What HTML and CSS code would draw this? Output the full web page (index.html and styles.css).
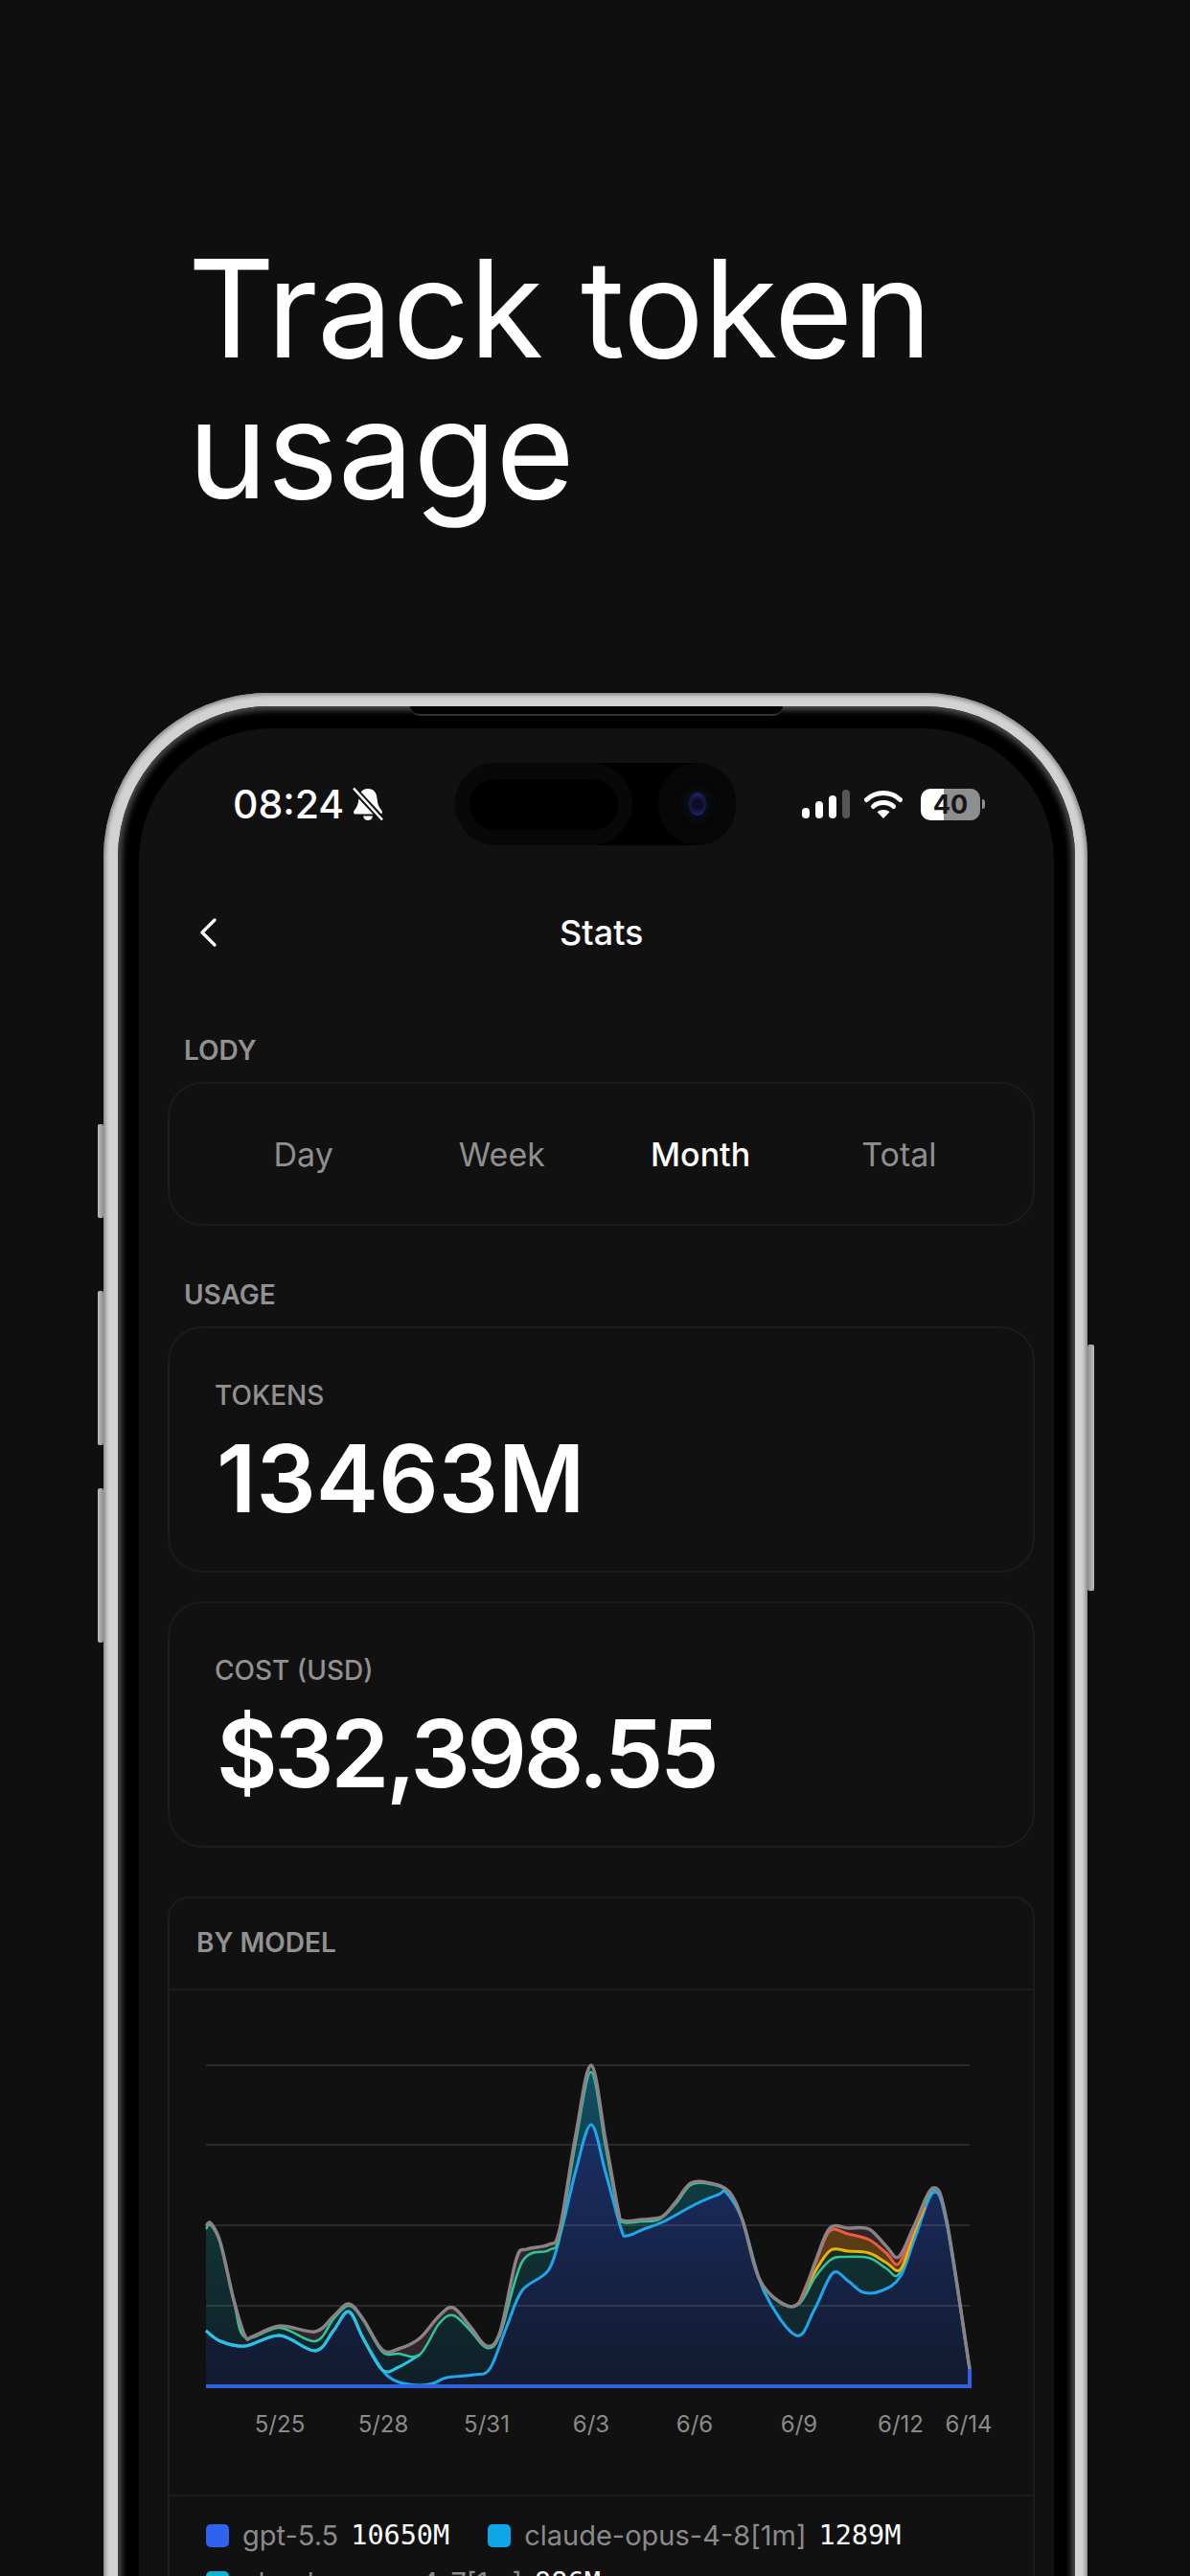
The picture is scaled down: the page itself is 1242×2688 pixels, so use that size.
FILE: index.html
```html
<!DOCTYPE html>
<html lang="en">

<head>
    <meta charset="UTF-8">
    <meta name="viewport" content="width=device-width, initial-scale=1.0">
    <title>Track token usage</title>
    <link rel="stylesheet" href="styles.css">
</head>

<body>
    <h1 class="headline">Track token<br>usage</h1>

    <div class="phone">
        <span class="side-btn btn-mute"></span>
        <span class="side-btn btn-up"></span>
        <span class="side-btn btn-down"></span>
        <span class="side-btn btn-power"></span>
        <span class="speaker"></span>

        <div class="bezel">
            <div class="screen">
                <div class="status">
                    <div class="status-left">
                        <span class="time">08:24</span>
                        <svg class="bell" viewBox="0 0 34 36">
                            <path d="M17 2c-6 0-9 4.500-9.500 10-.4 5-1.500 9-5 13-1 1.500-.3 3.500 1.500 3.500h26c1.800 0 2.500-2 1.500-3.500-3.500-4-4.600-8-5-13C26 6 23 2 17 2z" fill="#fff"/>
                            <path d="M12 30.500h10c-.5 3-2.500 4.500-5 4.500s-4.500-1.500-5-4.500z" fill="#fff"/>
                            <path d="M3 3l29 31" stroke="#111" stroke-width="6.500"/>
                            <path d="M2 1.500l30 33" stroke="#fff" stroke-width="2.600"/>
                        </svg>
                    </div>
                    <div class="island">
                        <div class="island-left"><span></span></div>
                        <div class="island-cam"><span></span></div>
                    </div>
                    <div class="status-right">
                        <div class="signal">
                            <span class="bar-1"></span>
                            <span class="bar-2"></span>
                            <span class="bar-3"></span>
                            <span class="bar-4"></span>
                        </div>
                        <svg class="wifi" viewBox="0 0 40 30">
                            <path d="M2.500 10.500C12 1 28 1 37.500 10.500" fill="none" stroke="#fff" stroke-width="5" stroke-linecap="round"/>
                            <path d="M9.500 17.500C15 12.300 25 12.300 30.500 17.500" fill="none" stroke="#fff" stroke-width="5" stroke-linecap="round"/>
                            <path d="M20 30l-6.500-6.800c3.500-3 9.500-3 13 0z" fill="#fff"/>
                        </svg>
                        <div class="battery"><div class="battery-body">40</div><span class="battery-nub"></span></div>
                    </div>
                </div>

                <div class="nav">
                    <svg class="back" viewBox="0 0 18 30">
                        <path d="M16 2L3 15l13 13" fill="none" stroke="#fff" stroke-width="3.200" stroke-linecap="round" stroke-linejoin="round"/>
                    </svg>
                    <div class="nav-title">Stats</div>
                </div>

                <div class="section-label first">LODY</div>
                <div class="card tabs">
                    <div class="tab">Day</div>
                    <div class="tab">Week</div>
                    <div class="tab active">Month</div>
                    <div class="tab">Total</div>
                </div>

                <div class="section-label">USAGE</div>
                <div class="card stat">
                    <div class="stat-label">TOKENS</div>
                    <div class="stat-value">13463M</div>
                </div>
                <div class="card stat">
                    <div class="stat-label">COST (USD)</div>
                    <div class="stat-value cost">$32,398.55</div>
                </div>

                <div class="model-card">
                    <div class="model-head">BY MODEL</div>
                    <svg id="chart" class="chart" viewBox="177 2077 901 526">
                        <text x="292" y="2538">5/25</text>
                        <text x="400" y="2538">5/28</text>
                        <text x="508" y="2538">5/31</text>
                        <text x="617" y="2538">6/3</text>
                        <text x="725" y="2538">6/6</text>
                        <text x="834" y="2538">6/9</text>
                        <text x="940" y="2538">6/12</text>
                        <text x="1011" y="2538">6/14</text>
                    </svg>
                    <div class="legend">
                        <div class="legend-item"><i class="dot gpt"></i><span class="model">gpt-5.5</span><b class="amount">10650M</b></div>
                        <div class="legend-item"><i class="dot opus8"></i><span class="model">claude-opus-4-8[1m]</span><b class="amount">1289M</b></div>
                        <div class="legend-item"><i class="dot opus7"></i><span class="model">claude-opus-4-7[1m]</span><b class="amount">986M</b></div>
                    </div>
                </div>
            </div>
        </div>
    </div>

    <script src="chart.js"></script>
</body>

</html>
```
FILE: styles.css
```css
html, body {
    margin: 0;
    height: 2688px;
    overflow: hidden;
}
body {
    width: 1242px;
    background-color: #0f0f10;
    font-family: Inter, "Liberation Sans", sans-serif;
    color: #fff;
}
.headline {
    margin: 0;
    padding: 248px 0 0 196px;
    height: 367px;
    font-size: 141px;
    line-height: 147px;
    font-weight: 400;
    letter-spacing: -0.500px;
}

.phone {
    position: relative;
    box-sizing: border-box;
    width: 1027px;
    height: 2100px;
    margin: 108px 0 0 108px;
    padding: 14px 13px 0 15px;
    border-radius: 172px 172px 0 0;
    background-color: #d2d2d2;
    box-shadow: inset 0 0 4px 2px #808080;
}
.side-btn {
    position: absolute;
    width: 6px;
    background: linear-gradient(90deg, #bdbdbd, #8f8f8f);
    border-radius: 2px;
}
.btn-mute { left: -6px; top: 450px; height: 98px; }
.btn-up { left: -6px; top: 624px; height: 161px; }
.btn-down { left: -6px; top: 830px; height: 161px; }
.btn-power {
    right: -7px;
    top: 680px;
    width: 7px;
    height: 257px;
    background: linear-gradient(270deg, #bdbdbd, #8f8f8f);
}
.speaker {
    position: absolute;
    top: 14px;
    left: 320px;
    width: 389px;
    height: 8px;
    background-color: #000;
    border-bottom: 2px solid #333;
    border-radius: 0 0 14px 14px;
}

.bezel {
    box-sizing: border-box;
    height: 2086px;
    padding: 23px 22px 0 22px;
    background-color: #000;
    border-radius: 158px 158px 0 0;
    box-shadow: inset 0 0 6px 4px #4d4d4d;
}
.screen {
    box-sizing: border-box;
    height: 2063px;
    padding: 0 20px 0 30px;
    background-color: #111;
    border-radius: 138px 138px 0 0;
    overflow: hidden;
}

.status {
    display: flex;
    align-items: center;
    height: 86px;
    padding-top: 36px;
}
.status-left {
    display: flex;
    align-items: center;
    box-sizing: border-box;
    width: 300px;
    padding-left: 68px;
}
.time {
    font-size: 41px;
    font-weight: 500;
    line-height: 50px;
}
.bell {
    width: 34px;
    height: 36px;
    margin-left: 8px;
}
.island {
    display: flex;
    justify-content: space-between;
    width: 293px;
    height: 86px;
    background-color: #000;
    border-radius: 43px;
}
.island-left {
    display: flex;
    align-items: center;
    justify-content: center;
    width: 185px;
    background-color: #080808;
    border-radius: 43px;
}
.island-left span {
    width: 155px;
    height: 53px;
    background-color: #000;
    border-radius: 26px;
}
.island-cam {
    display: flex;
    align-items: center;
    justify-content: center;
    width: 81px;
    background-color: #070707;
    border-radius: 43px;
}
.island-cam span {
    width: 18px;
    height: 24px;
    border-radius: 50%;
    background: radial-gradient(circle, #0c0c22 30%, #241f70 75%, #10182c 100%);
    box-shadow: 0 0 8px 3px #0a1420;
}
.status-right {
    display: flex;
    align-items: center;
    box-sizing: border-box;
    width: 312px;
    padding-left: 69px;
}
.signal {
    display: flex;
    align-items: flex-end;
    gap: 6px;
    height: 30px;
}
.signal span {
    width: 8px;
    border-radius: 4px;
    background-color: #fff;
}
.bar-1 { height: 11px; }
.bar-2 { height: 18px; }
.bar-3 { height: 24px; }
.signal .bar-4 {
    height: 30px;
    background-color: #555;
}
.wifi {
    width: 40px;
    height: 30px;
    margin-left: 15px;
}
.battery {
    display: flex;
    align-items: center;
    margin-left: 19px;
}
.battery-body {
    width: 62px;
    height: 33px;
    border-radius: 10px;
    background: linear-gradient(90deg, #fff 38%, #8e8e8e 38%);
    color: #161616;
    font-size: 27px;
    font-weight: 700;
    line-height: 33px;
    text-align: center;
}
.battery-nub {
    width: 3px;
    height: 10px;
    margin-left: 2px;
    border-radius: 0 3px 3px 0;
    background-color: #8e8e8e;
}

.nav {
    display: flex;
    align-items: center;
    height: 60px;
    margin-top: 61px;
    padding-left: 33px;
}
.back {
    width: 18px;
    height: 30px;
}
.nav-title {
    margin-left: 358px;
    font-size: 36px;
    font-weight: 500;
}

.section-label {
    margin: 55px 0 16px;
    padding-left: 17px;
    color: #919191;
    font-size: 28px;
    font-weight: 600;
    line-height: 34px;
}
.section-label.first {
    margin-top: 76px;
}
.card {
    box-sizing: border-box;
    border: 2px solid #1c1c1c;
    border-radius: 36px;
}
.tabs {
    display: grid;
    grid-template-columns: repeat(4, 1fr);
    align-items: center;
    height: 150px;
    padding: 0 36px;
}
.tab {
    color: #8f8f8f;
    font-size: 34px;
    text-align: center;
}
.tab.active {
    color: #fff;
    font-weight: 500;
}
.stat {
    height: 257px;
    padding: 53px 0 0 47px;
    margin-bottom: 30px;
}
.stat-label {
    color: #919191;
    font-size: 28px;
    font-weight: 500;
    line-height: 34px;
}
.stat-value {
    margin-top: 15px;
    padding-left: 2px;
    font-size: 98px;
    font-weight: 600;
    line-height: 110px;
}
.stat-value.cost {
    letter-spacing: -3.400px;
}

.model-card {
    margin-top: 51px;
    border: 2px solid #1c1c1c;
    border-radius: 22px 22px 0 0;
}
.model-head {
    box-sizing: border-box;
    height: 96px;
    padding: 29px 0 0 28px;
    border-bottom: 2px solid #1c1c1c;
    color: #919191;
    font-size: 28px;
    font-weight: 600;
    line-height: 34px;
}
.chart {
    display: block;
    width: 901px;
    height: 526px;
}
.chart text {
    fill: #8a8a8a;
    font-size: 24px;
    text-anchor: middle;
}
.legend {
    display: flex;
    flex-wrap: wrap;
    gap: 16px 40px;
    padding: 24px 0 0 38px;
    border-top: 2px solid #1c1c1c;
}
.legend-item {
    display: flex;
    align-items: center;
    height: 33px;
    font-size: 28px;
}
.dot {
    width: 24px;
    height: 24px;
    margin-right: 14px;
    border-radius: 5px;
}
.gpt { background-color: #2f62ee; }
.opus8 { background-color: #0ea5e9; }
.opus7 { background-color: #06b6d4; }
.model {
    color: #8a8a8a;
    font-size: 29px;
}
.amount {
    margin-left: 13px;
    font-family: "DejaVu Sans Mono", monospace;
    font-size: 28.500px;
    font-weight: 400;
}
```
FILE: chart.js
```js
const NS = 'http://www.w3.org/2000/svg';
const chart = document.getElementById('chart');
const BASE = 2490;

const gray = [[215,2323],[220,2320],[230,2340],[244,2400],[256,2438],[264,2438],[292,2427],[329,2433],[348,2417],[364,2404],[379,2420],[399,2452],[416,2451],[438,2440],[458,2417],[473,2408],[491,2428],[508,2448],[522,2433],[539,2357],[550,2347],[573,2342],[584,2327],[601,2227],[617,2155],[632,2233],[645,2305],[650,2317],[670,2316],[691,2313],[705,2298],[721,2278],[741,2278],[761,2287],[775,2317],[792,2377],[814,2402],[834,2403],[851,2360],[866,2325],[885,2325],[907,2326],[925,2344],[938,2355],[954,2323],[974,2283],[988,2317],[1012,2472]];
const red = [[834,2403],[851,2362],[866,2328],[885,2331],[907,2337],[925,2351],[938,2362],[954,2325],[965,2300]];
const yellow = [[834,2404],[851,2370],[867,2348],[885,2349],[907,2351],[925,2361],[940,2368],[954,2330],[965,2303]];
const green = [[215,2326],[220,2322],[230,2341],[244,2401],[256,2439],[292,2429],[329,2443],[348,2420],[364,2406],[379,2421],[399,2454],[416,2456],[438,2457],[458,2425],[473,2416],[491,2432],[508,2450],[522,2436],[545,2360],[573,2348],[584,2333],[601,2235],[617,2162],[632,2240],[645,2308],[651,2319],[670,2318],[688,2316],[705,2300],[721,2280],[741,2279],[761,2288],[775,2317],[792,2377],[814,2403],[834,2404],[851,2376],[867,2358],[880,2355],[907,2356],[925,2367],[938,2373],[954,2330],[974,2285],[988,2317],[1012,2472]];
const cyan = [[215,2432],[230,2443],[256,2448],[292,2437],[329,2453],[348,2432],[364,2412],[379,2440],[399,2473],[416,2470],[438,2457]];
const blue = [[215,2432],[230,2443],[256,2448],[292,2437],[329,2453],[348,2432],[364,2412],[379,2440],[399,2473],[410,2483],[421,2487],[438,2489],[452,2487],[466,2481],[494,2478],[511,2472],[528,2430],[545,2390],[573,2368],[587,2323],[601,2265],[617,2217],[632,2267],[648,2325],[654,2333],[672,2326],[693,2318],[726,2300],[750,2290],[758,2288],[775,2317],[797,2390],[831,2437],[850,2410],[869,2372],[885,2380],[901,2392],[921,2390],[940,2375],[955,2335],[974,2288],[988,2320],[1012,2472]];

function smooth(pts) {
    let d = `M${pts[0][0]} ${pts[0][1]}`;
    for (let i = 0; i < pts.length - 1; i++) {
        const p0 = pts[i - 1] || pts[i];
        const p1 = pts[i];
        const p2 = pts[i + 1];
        const p3 = pts[i + 2] || p2;
        const c1x = p1[0] + (p2[0] - p0[0]) / 6;
        const c1y = p1[1] + (p2[1] - p0[1]) / 6;
        const c2x = p2[0] - (p3[0] - p1[0]) / 6;
        const c2y = p2[1] - (p3[1] - p1[1]) / 6;
        d += `C${c1x.toFixed(1)} ${c1y.toFixed(1)} ${c2x.toFixed(1)} ${c2y.toFixed(1)} ${p2[0]} ${p2[1]}`;
    }
    return d;
}

function add(tag, attrs) {
    const el = document.createElementNS(NS, tag);
    for (const key in attrs) el.setAttribute(key, attrs[key]);
    chart.appendChild(el);
    return el;
}

function area(pts, fill) {
    const last = pts[pts.length - 1][0];
    add('path', { d: `${smooth(pts)}L${last} ${BASE}L${pts[0][0]} ${BASE}Z`, fill });
}

function line(pts, stroke, width = 3) {
    add('path', { d: smooth(pts), fill: 'none', stroke, 'stroke-width': width, 'stroke-linejoin': 'round' });
}

const defs = add('defs', {});
defs.innerHTML = `
    <linearGradient id="navy" gradientUnits="userSpaceOnUse" x1="0" y1="2217" x2="0" y2="2490"><stop offset="0" stop-color="#1b2f66"/><stop offset="1" stop-color="#121a2e"/></linearGradient>
    <linearGradient id="teal" gradientUnits="userSpaceOnUse" x1="0" y1="2155" x2="0" y2="2490"><stop offset="0" stop-color="#14506a"/><stop offset="0.5" stop-color="#103434"/><stop offset="1" stop-color="#101f28"/></linearGradient>`;

area(gray, '#33232a');
area(red, '#5a3d14');
area(yellow, '#1c2a1c');
area(green, 'url(#teal)');
area(blue, 'url(#navy)');

for (const y of [2155, 2238, 2322, 2406]) {
    add('line', { x1: 215, x2: 1012, y1: y, y2: y, stroke: 'rgba(255,255,255,0.11)', 'stroke-width': 2 });
}

line(blue, '#1ea7ee');
line(cyan, '#28c4e2');
line(green, '#2cc79a', 2.5);
line(yellow, '#eab308');
line(red, '#ef5a3c');
line(gray, '#8a8285', 3.5);

add('path', { d: `M215 ${BASE}H1012V2472`, fill: 'none', stroke: '#2f62e0', 'stroke-width': 4 });
```
